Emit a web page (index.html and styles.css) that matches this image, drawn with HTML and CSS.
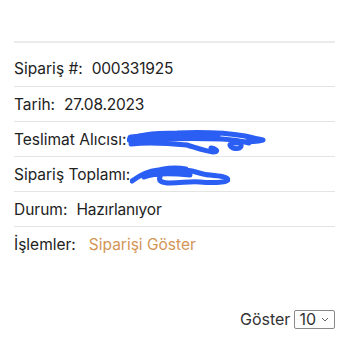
FILE: index.html
```html
<!DOCTYPE html>
<html lang="tr">
<head>
<meta charset="utf-8">
<link rel="stylesheet" href="styles.css">
</head>
<body>
<div class="page">
  <ul class="order">
    <li class="row first"><span class="label">Sipariş #:</span><span class="value">000331925</span></li>
    <li class="row"><span class="label">Tarih:</span><span class="value">27.08.2023</span></li>
    <li class="row"><span class="label">Teslimat Alıcısı:</span><svg class="scribble s1" width="140" height="26" viewBox="0 0 140 26"><path d="M2 10 C10 4 30 3 50 3 C75 2 100 3 118 6 C126 8 130 9 136 10 C128 12 120 12 112 12 C116 16 114 20 106 18 C100 15 104 12 110 13 M6 12 C30 8 60 8 95 9 C110 10 118 12 122 13 M4 14 C20 12 40 13 60 15 C70 18 78 21 86 22 C92 22 90 19 84 18" fill="none" stroke="#2b5ef2" stroke-width="5" stroke-linecap="round" stroke-linejoin="round"/><path d="M4 8 C30 5 60 5 90 6" fill="none" stroke="#2b5ef2" stroke-width="7" stroke-linecap="round"/></svg></li>
    <li class="row"><span class="label">Sipariş Toplamı:</span><svg class="scribble s2" width="100" height="22" viewBox="0 0 100 22"><path d="M2 16 C10 10 18 6 28 5 C40 3 52 4 62 6 C70 8 75 10 80 10 C90 11 98 12 98 15 C96 18 80 18 70 17 C60 16 52 18 40 18 C32 18 28 16 30 12 M14 12 C24 8 40 8 60 10 M20 8 C30 4 44 2 56 4" fill="none" stroke="#2b5ef2" stroke-width="5" stroke-linecap="round" stroke-linejoin="round"/></svg></li>
    <li class="row"><span class="label">Durum:</span><span class="value">Hazırlanıyor</span></li>
    <li class="row last"><span class="label">İşlemler:</span><a class="value link" href="#">Siparişi Göster</a></li>
  </ul>
  <div class="pager">
    <span class="pager-label">Göster</span>
    <div class="select"><span class="select-value">10</span><svg class="chev" width="8" height="5" viewBox="0 0 8 5"><path d="M1 1 L4 4 L7 1" fill="none" stroke="#666" stroke-width="1"/></svg></div>
  </div>
</div>
</body>
</html>
```
FILE: styles.css
```css
html, body {
  margin: 0;
  padding: 0;
  background: #fff;
}
body {
  font-family: Inter, "Liberation Sans", sans-serif;
  color: #222;
  font-size: 15.5px;
}
.page {
  padding: 41px 15px 0 14px;
}
.order {
  list-style: none;
  margin: 0;
  padding: 0;
  border-top: 2px solid #ebebeb;
}
.row {
  display: flex;
  align-items: center;
  height: 34px;
  border-bottom: 1px solid #e4e4e4;
  white-space: nowrap;
}
.row.first {
  align-items: flex-end;
  padding-bottom: 8px;
  box-sizing: border-box;
  height: 44px;
}
.row.last {
  border-bottom: none;
}
.label {
  margin-right: 9px;
}
.value {
  color: #222;
  letter-spacing: -0.2px;
}
.link {
  color: #d39556;
  text-decoration: none;
  margin-left: 4px;
  letter-spacing: 0;
}
.scribble {
  margin-left: -8px;
  display: block;
}
.s1 { margin-top: 8px; }
.s2 { margin-top: 4px; margin-left: -9px; }
.pager {
  display: flex;
  justify-content: flex-end;
  align-items: center;
  margin-top: 48px;
  gap: 4px;
}
.pager-label {
  font-size: 16px;
  color: #333;
}
.select {
  display: flex;
  align-items: center;
  gap: 5px;
  border: 1px solid #888;
  border-radius: 2px;
  padding: 0 5px 0 4px;
  height: 17px;
  font-size: 16px;
  color: #333;
}
.chev { display: block; }
```
